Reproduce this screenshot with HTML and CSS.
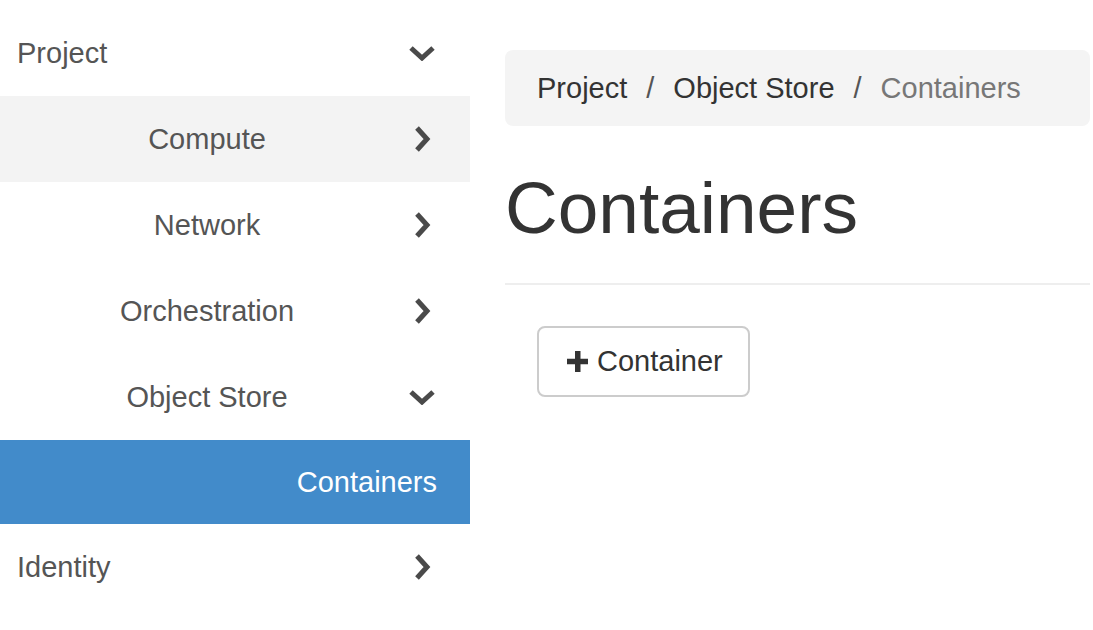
FILE: index.html
```html
<!DOCTYPE html>
<html lang="en">
<head>
<meta charset="utf-8">
<title>Containers</title>
<link rel="stylesheet" href="styles.css">
</head>
<body>
<div class="layout">
  <nav class="sidebar">
    <div class="nav-row top">
      <span class="label">Project</span>
      <span class="chev"><svg width="28" height="16" viewBox="0 0 28 16"><polyline points="3,3 14,13 25,3" fill="none" stroke="#4a4a4a" stroke-width="5" stroke-linecap="butt" stroke-linejoin="miter"/></svg></span>
    </div>
    <div class="nav-row sub hover">
      <span class="label">Compute</span>
      <span class="chev"><svg width="28" height="28" viewBox="0 0 28 28"><polyline points="9,3 19,14 9,25" fill="none" stroke="#4a4a4a" stroke-width="5"/></svg></span>
    </div>
    <div class="nav-row sub">
      <span class="label">Network</span>
      <span class="chev"><svg width="28" height="28" viewBox="0 0 28 28"><polyline points="9,3 19,14 9,25" fill="none" stroke="#4a4a4a" stroke-width="5"/></svg></span>
    </div>
    <div class="nav-row sub">
      <span class="label">Orchestration</span>
      <span class="chev"><svg width="28" height="28" viewBox="0 0 28 28"><polyline points="9,3 19,14 9,25" fill="none" stroke="#4a4a4a" stroke-width="5"/></svg></span>
    </div>
    <div class="nav-row sub">
      <span class="label">Object Store</span>
      <span class="chev"><svg width="28" height="16" viewBox="0 0 28 16"><polyline points="3,3 14,13 25,3" fill="none" stroke="#4a4a4a" stroke-width="5"/></svg></span>
    </div>
    <div class="nav-row leaf active">
      <span class="label">Containers</span>
    </div>
    <div class="nav-row top">
      <span class="label">Identity</span>
      <span class="chev"><svg width="28" height="28" viewBox="0 0 28 28"><polyline points="9,3 19,14 9,25" fill="none" stroke="#4a4a4a" stroke-width="5"/></svg></span>
    </div>
  </nav>
  <main class="main">
    <ol class="breadcrumb">
      <li class="crumb">Project</li>
      <li class="sep">/</li>
      <li class="crumb">Object Store</li>
      <li class="sep">/</li>
      <li class="crumb current">Containers</li>
    </ol>
    <div class="page-header">
      <h1 class="title">Containers</h1>
    </div>
    <div class="actions">
      <button class="btn" type="button">
        <svg class="plus" width="21" height="21" viewBox="0 0 21 21"><rect x="8" y="0" width="5.5" height="21" fill="#333"/><rect x="0" y="7.75" width="21" height="5.5" fill="#333"/></svg>
        <span>Container</span>
      </button>
    </div>
  </main>
</div>
</body>
</html>
```

FILE: styles.css
```css
* { box-sizing: border-box; }
html, body { margin: 0; padding: 0; background: #fff; }
body {
  font-family: "Liberation Sans", Arial, sans-serif;
  font-size: 29px;
  color: #333;
}
.layout {
  display: flex;
  align-items: flex-start;
  width: 1093px;
}
.sidebar {
  width: 470px;
  flex: 0 0 470px;
  margin-top: 10px;
}
.nav-row {
  display: flex;
  align-items: center;
  height: 86px;
  color: #555;
  line-height: 40px;
}
.nav-row .label { flex: 1; }
.nav-row .chev {
  width: 28px;
  margin-right: 34px;
  display: flex;
  justify-content: center;
  align-items: center;
}
.nav-row svg { display: block; }
.nav-row.top { padding-left: 17px; }
.nav-row.sub { padding-left: 6px; }
.nav-row.sub .label { text-align: center; }
.nav-row.hover { background: #f3f3f3; }
.nav-row.leaf {
  height: 84px;
  padding-right: 33px;
}
.nav-row.leaf .label { text-align: right; }
.nav-row.active { background: #428bca; color: #fff; }

.main {
  flex: 1;
  padding: 50px 3px 0 35px;
}
.breadcrumb {
  list-style: none;
  margin: 0;
  padding: 0 32px;
  height: 76px;
  display: flex;
  align-items: center;
  background: #f4f4f4;
  border-radius: 8px;
  line-height: 40px;
}
.crumb { color: #333; }
.crumb.current { color: #777; }
.sep { color: #555; margin: 0 19px; }
.page-header {
  margin-top: 42px;
  padding-bottom: 36px;
  border-bottom: 2px solid #eee;
}
.title {
  margin: 0;
  font-size: 73px;
  font-weight: normal;
  line-height: 79px;
  color: #333;
}
.actions {
  padding: 41px 0 0 32px;
}
.btn {
  display: inline-flex;
  align-items: center;
  gap: 9px;
  height: 71px;
  padding: 0 25px 0 28px;
  font-family: inherit;
  font-size: 29px;
  color: #333;
  background: #fff;
  border: 2px solid #ccc;
  border-radius: 8px;
}
.btn .plus { display: block; }
```
